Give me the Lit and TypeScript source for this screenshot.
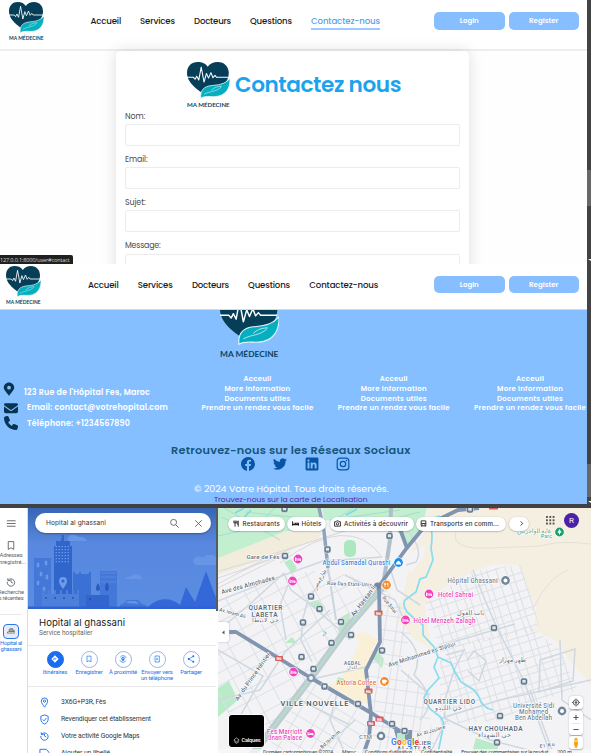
import { LitElement, html, css, svg } from "lit";
import { customElement, property } from "lit/decorators.js";

const NAV = ["Accueil", "Services", "Docteurs", "Questions", "Contactez-nous"];
const NAV_W = [30.5, 35, 37, 42, 69];

/** One line of text, letter-spaced so that it fills the width w. */
@customElement("fit-label")
class FitLabel extends LitElement {
  @property() text = "";
  @property({ type: Number }) w = 0;
  static styles = css`
    :host { display: inline-block; white-space: nowrap; line-height: inherit; }
    span { display: inline-block; }
  `;
  render() { return html`<span>${this.text}</span>`; }
  updated() {
    const s = this.renderRoot.querySelector("span") as HTMLElement;
    s.style.letterSpacing = "0px";
    const natural = s.getBoundingClientRect().width;
    if (this.w) s.style.letterSpacing = (this.w - natural) / this.text.length + "px";
  }
}

@customElement("brand-logo")
class BrandLogo extends LitElement {
  static styles = css`
    :host { display: block; }
    svg { display: block; width: 100%; height: 100%; }
    text { font: 700 14.5px "Lato", sans-serif; fill: #0b4460; }
  `;
  render() {
    return html`<svg viewBox="0 0 106 117" preserveAspectRatio="none">
      <path d="M51 88C38 78 0 58 0 28C0 10 12 0 26 0C38 0 47 5 51 12C56 4 65 0 76 0C92 0 103 12 103 28C103 52 84 68 51 88Z" fill="#063d57"/>
      <path d="M0 39H16L20 44L24 36L29 46L35 13L42 51L48 29L53 41L59 27L64 40L69 34L73 39H103" fill="none" stroke="#fff" stroke-width="2.6" stroke-linejoin="round"/>
      <path d="M34 92C32 72 42 62 60 60C76 58 92 58 106 42C107 66 96 86 70 88C56 89 46 85 34 92Z" fill="#05afc0" stroke="#e9f6fb" stroke-width="2"/>
      <path d="M42 82C56 74 72 76 84 64M60 72C68 64 76 62 86 62" fill="none" stroke="#dff5f8" stroke-width="1.4"/>
      <text x="0" y="115" textLength="105" lengthAdjust="spacingAndGlyphs">MA MÉDECINE</text>
    </svg>`;
  }
}

@customElement("site-header")
class SiteHeader extends LitElement {
  @property({ type: Number }) active = -1;
  static styles = css`
    :host { display: flex; align-items: flex-start; background: #fff; box-sizing: border-box; width: 587px;
      font: 500 8.6px/12px "Poppins", Inter, sans-serif; font-feature-settings: "cv11"; color: #1c1c1c; }
    brand-logo { width: 35px; height: 39px; flex: none; margin-top: 2px; }
    nav { display: flex; gap: 19px; margin: 15px 0 0 46.5px; }
    nav span { padding-bottom: 1px; border-bottom: 2px solid transparent; height: 12px; }
    .on { color: #5b9fe8; border-color: #9ccaff; }
    .buttons { display: flex; gap: 4px; margin: 12px 8px 0 auto; }
    .b { width: 70.5px; height: 18px; border-radius: 5px; background: #86beff; color: #fff; display: flex; align-items: center; justify-content: center; font-size: 7px; font-weight: 600; }
    :host(.low) nav { margin: 14.5px 0 0 47px; gap: 19.2px; }
    :host(.low) .b { height: 17px; }
  `;
  render() {
    return html`<brand-logo></brand-logo>
      <nav>${NAV.map((t, i) => html`<span class=${i === this.active ? "on" : ""}><fit-label text=${t} w=${NAV_W[i]}></fit-label></span>`)}</nav>
      <div class="buttons"><div class="b"><fit-label text="Login" w="19"></fit-label></div><div class="b"><fit-label text="Register" w="29.5"></fit-label></div></div>`;
  }
}

@customElement("contact-page")
class ContactPage extends LitElement {
  static styles = css`
    :host { display: block; position: relative; height: 264px; overflow: hidden; background: #fefefe; font-family: "Poppins", Inter, sans-serif; font-feature-settings: "cv11"; }
    site-header { height: 51px; padding-left: 9px; border-bottom: 2px solid #eee; }
    .card { box-sizing: border-box; width: 353px; height: 230px; margin-left: 116px; padding: 11px 9.5px 0 9px; background: #fff; border-radius: 5px; box-shadow: 0 0 15px rgba(0,0,0,.13); }
    .title { display: flex; gap: 5px; margin-left: 62px; height: 47.5px; }
    .title brand-logo { width: 43px; height: 46px; }
    .title b { font-size: 21.6px; font-weight: 600; line-height: 46px; color: #1ba3ee; }
    .field { height: 43.2px; font-size: 7.9px; line-height: 14px; color: #4b4b4b; }
    .input { box-sizing: border-box; height: 21.5px; margin-top: .5px; border: 1px solid #ececec; border-radius: 2px; background: #fff; }
    .url { position: absolute; left: 0; bottom: 0; width: 73px; height: 9.5px; background: #202020; color: #d5d5d5; font: 5.6px/10px "Open Sans", sans-serif; border-radius: 0 2px 0 0; }
  `;
  render() {
    const fields: [string, number][] = [["Nom:", 20], ["Email:", 22.5], ["Sujet:", 20.5], ["Message:", 35.5]];
    return html`<site-header .active=${4}></site-header>
      <div class="card">
        <div class="title"><brand-logo></brand-logo><b><fit-label text="Contactez nous" w="166"></fit-label></b></div>
        ${fields.map(([t, w]) => html`<div class="field"><fit-label text=${t} w=${w}></fit-label><div class="input"></div></div>`)}
      </div>
      <div class="url"><fit-label text="127.0.0.1:8000/user#contact" w="69.5"></fit-label></div>`;
  }
}

@customElement("footer-page")
class FooterPage extends LitElement {
  static styles = css`
    :host { display: block; height: 240px; overflow: hidden; font-family: "Poppins", Inter, sans-serif; font-feature-settings: "cv11"; background: #86bfff; }
    site-header { height: 46px; padding-left: 6px; border-bottom: 1px solid #c5dcf2; }
    .foot { height: 194px; overflow: hidden; display: flex; flex-direction: column; align-items: center; color: #fff; width: 587px; }
    .big { flex: none; width: 59px; height: 64px; margin: -16px 0 0 -88px; align-self: center; }
    .cols { flex: none; align-self: stretch; display: flex; height: 67.500px; margin-top: 16px; }
    .contact { width: 201.500px; padding: 10.500px 0 0 4px; box-sizing: border-box; font-size: 7.900px; font-weight: 600; line-height: 15.6px; }
    .row { display: flex; align-items: center; height: 15.6px; }
    .row svg { flex: none; width: 14px; height: 14px; fill: #073450; margin-right: 9px; }
    .row:first-child svg { margin: -7px 9px 0 -2px; }
    .row:first-child fit-label { margin-left: -1px; }
    .links { display: flex; gap: 24.3px; }
    .link { width: 112px; font-size: 7px; font-weight: 600; line-height: 9.8px; text-align: center; white-space: nowrap; }
    .link div { display: flex; justify-content: center; height: 9.8px; }
    h2 { margin: 0; flex: none; font-size: 11.3px; line-height: 16px; font-weight: 600; color: #17567b; align-self: flex-start; margin-left: 171px; }
    .social { display: flex; gap: 17.8px; align-self: flex-start; margin: -1px 0 0 241px; height: 15px; flex: none; }
    .social svg { width: 14px; height: 14px; fill: #0753a5; }
    .copy { align-self: flex-start; margin: 10px 0 0 194px; font-size: 9.5px; line-height: 14px; }
    .find { align-self: flex-start; margin: -.5px 0 0 214px; font-size: 7.6px; line-height: 10px; color: #562a9c; }
    .find, .copy { flex: none; }
  `;
  render() {
    const links: [string, number][] = [["Acceuil", 28], ["More information", 66], ["Documents utiles", 66], ["Prendre un rendez vous facile", 112]];
    return html`<site-header class="low"></site-header>
      <div class="foot">
        <brand-logo class="big"></brand-logo>
        <div class="cols">
          <div class="contact">
            <div class="row"><svg viewBox="0 0 24 24"><path d="M12 1C7 1 3 5 3 10c0 4 6 9 9 14c3-5 9-10 9-14c0-5-4-9-9-9zm0 5.500a3.200 3.200 0 1 1 0 6.400a3.200 3.200 0 0 1 0-6.400z" fill-rule="evenodd"/></svg><fit-label text="123 Rue de l'Hôpital Fes, Maroc" w="126"></fit-label></div>
            <div class="row"><svg viewBox="0 0 24 24"><path d="M2 4h20a2 2 0 0 1 1.200 3.500L12.800 15a1.500 1.500 0 0 1-1.600 0L.8 7.500A2 2 0 0 1 2 4zM0 9.500l10.500 7.300a2.600 2.600 0 0 0 3 0L24 9.500V18a3 3 0 0 1-3 3H3a3 3 0 0 1-3-3z"/></svg><fit-label text="Email: contact@votrehopital.com" w="141"></fit-label></div>
            <div class="row"><svg viewBox="0 0 24 24"><path d="M7.700 1.200C7.300.200 6.200-.300 5.200 0L1.200 1.200C.500 1.400 0 2.200 0 3c0 11.600 9.400 21 21 21c.8 0 1.600-.5 1.800-1.300l1.200-4.200c.3-1-.3-2.100-1.300-2.500l-5-2.100c-.9-.4-1.900-.1-2.400.600L13.300 17A15.800 15.800 0 0 1 7 10.700L9.400 8.800c.7-.6 1-1.600.6-2.500z"/></svg><fit-label text="Téléphone: +1234567890" w="103"></fit-label></div>
          </div>
          <div class="links">${[0, 1, 2].map(() => html`<div class="link">${links.map(([t, w]) => html`<div><fit-label text=${t} w=${w}></fit-label></div>`)}</div>`)}</div>
        </div>
        <h2><fit-label text="Retrouvez-nous sur les Réseaux Sociaux" w="239.500"></fit-label></h2>
        <div class="social">
          <svg viewBox="0 0 24 24"><path d="M24 12a12 12 0 1 0-13.900 11.900v-8.400H7.100V12h3V9.400c0-3 1.800-4.700 4.500-4.700l2.700.2v3h-1.500c-1.500 0-2 .9-2 1.900V12h3.400l-.6 3.500h-2.800v8.400A12 12 0 0 0 24 12z"/></svg>
          <svg viewBox="0 0 24 24"><path d="M24 4.600a10 10 0 0 1-2.800.8a5 5 0 0 0 2.100-2.700a10 10 0 0 1-3.100 1.200a4.900 4.900 0 0 0-8.400 4.500A14 14 0 0 1 1.700 3.200a4.900 4.900 0 0 0 1.500 6.500A4.900 4.900 0 0 1 1 9.100a4.900 4.900 0 0 0 3.900 4.900a5 5 0 0 1-2.200.1a4.900 4.900 0 0 0 4.600 3.400A9.900 9.900 0 0 1 0 19.500A14 14 0 0 0 21.500 7a10 10 0 0 0 2.500-2.400z"/></svg>
          <svg viewBox="0 0 24 24"><path fill-rule="evenodd" d="M3 1h18a2 2 0 0 1 2 2v18a2 2 0 0 1-2 2H3a2 2 0 0 1-2-2V3a2 2 0 0 1 2-2zm1.300 8.400v10.300h3.300V9.400zM6 4.200a1.900 1.900 0 1 0 0 3.800a1.900 1.900 0 0 0 0-3.800zM9.700 9.400v10.300H13v-5.100c0-3 3.600-3 3.600 0v5.100h3.300v-6c0-5.300-5.200-5.300-6.900-2.800V9.400z"/></svg>
          <svg viewBox="0 0 24 24"><path fill-rule="evenodd" d="M7 1h10a6 6 0 0 1 6 6v10a6 6 0 0 1-6 6H7a6 6 0 0 1-6-6V7a6 6 0 0 1 6-6zm0 2a4 4 0 0 0-4 4v10a4 4 0 0 0 4 4h10a4 4 0 0 0 4-4V7a4 4 0 0 0-4-4zm5 3.400a5.600 5.600 0 1 1 0 11.200a5.600 5.600 0 0 1 0-11.200zm0 2a3.600 3.600 0 1 0 0 7.200a3.600 3.600 0 0 0 0-7.200zM18 4.800a1.300 1.300 0 1 1 0 2.600a1.300 1.300 0 0 1 0-2.600z"/></svg>
        </div>
        <div class="copy"><fit-label text="© 2024 Votre Hôpital. Tous droits réservés." w="194.500"></fit-label></div>
        <div class="find"><fit-label text="Trouvez-nous sur la carte de Localisation" w="153.500"></fit-label></div>
      </div>`;
  }
}

const HISTORY = svg`<path d="M5 5v5h5M5.500 9.500A8 8 0 1 1 4 13M12 8v5l4 2.500" fill="none" stroke="currentColor" stroke-width="2"/>`;
const BOOKMARK = svg`<path d="M6 3.500h12v17l-6-3.500l-6 3.500z" fill="none" stroke="currentColor" stroke-width="2"/>`;

@customElement("place-panel")
class PlacePanel extends LitElement {
  static styles = css`
    :host { display: flex; width: 218px; height: 245px; overflow: hidden; background: #fff; font-family: Roboto, sans-serif; }
    .rail { position: relative; width: 28px; flex: none; display: flex; flex-direction: column; align-items: center; overflow: hidden; color: #5f6368; font-size: 5.8px; line-height: 6.8px; box-sizing: border-box; padding-right: 6px; box-shadow: inset -1px 0 #dcdcdc; }
    .rail svg { width: 12px; height: 11px; flex: none; }
    .menu { margin-top: 9.500px; }
    .save { margin-top: 11px; }
    .rail .t { height: 13.600px; display: flex; flex-direction: column; align-items: center; }
    .save + .t { margin-top: 1.500px; }
    .hist { margin-top: 10.500px; }
    .hist + .t { margin-top: 1.500px; }
    .line { width: 22px; height: 1px; background: #e8e8e8; margin-top: 11.500px; flex: none; }
    .thumb { width: 14px; height: 13px; margin-top: 9px; border: 1.300px solid #2d76e6; border-radius: 4px; background: #e6edf8; display: flex; align-items: center; justify-content: center; flex: none; }
    .rail .thumb svg { width: 9px; height: 8px; }
    .thumb + .t { margin-top: 1px; color: #1a73e8; line-height: 6px; }
    .panel { width: 188px; flex: none; display: flex; flex-direction: column; }
    .hero { position: relative; height: 101px; flex: none; }
    .hero > svg { display: block; width: 188px; height: 101px; }
    .search { position: absolute; left: 7px; top: 5px; width: 176px; height: 20px; border-radius: 10px; background: #fff; box-shadow: 0 1px 2px rgba(0,0,0,.3); box-sizing: border-box; padding: 0 7px 0 11px; display: flex; align-items: center; font: 6.600px Inter, sans-serif; color: #333; }
    .search svg { width: 11px; height: 11px; color: #5f6368; }
    .search .mag { margin-left: auto; margin-right: 13px; }
    h1 { margin: 6.500px 0 0 11px; font: 400 9.600px/14px Inter, sans-serif; color: #222; }
    .sub { margin-left: 11px; font-size: 6.500px; line-height: 7px; color: #666; }
    .acts { margin-top: 8px; border-top: 1px solid #e8e8e8; border-bottom: 1px solid #e8e8e8; height: 42.500px; display: flex; padding-left: 10px; flex: none; box-sizing: border-box; }
    .act { width: 34px; display: flex; flex-direction: column; align-items: center; font-size: 5.900px; line-height: 6.300px; color: #1a73e8; }
    .disc { box-sizing: border-box; width: 17px; height: 17px; border: 1px solid #8db7f3; border-radius: 50%; margin: 5px 0 1.500px; display: flex; align-items: center; justify-content: center; flex: none; }
    .disc svg { width: 8px; height: 8px; }
    .solid { background: #1a6cf0; color: #fff; border-color: #1a6cf0; }
    .facts { padding: 7px 0 0 11px; }
    .fact { height: 16.800px; display: flex; align-items: center; gap: 11px; font-size: 6.800px; color: #333; }
    .fact svg { width: 11px; height: 11px; color: #1a6fe6; }
    .scroll { width: 2px; height: 103px; background: #555c66; }
  `;
  render() {
    const windows = [0, 1, 2, 3, 4, 5].flatMap(r => [0, 1, 2, 3, 4].map(c => svg`<path d="M${27.500 + c * 3} ${38 + r * 3}h1.500v1.200h-1.500z" fill="#6d99e8"/>`));
    const stroke = (d: string) => svg`<path d=${d} fill="none" stroke="currentColor" stroke-width="2"/>`;
    const acts = [
      { l: [["Itinéraires", 24.500]], i: svg`<path d="M12 1l11 11-11 11L1 12z" fill="#fff"/><path d="M8 15v-4h6M12 8l3 3-3 3" stroke="#1a6cf0" stroke-width="2" fill="none"/>` },
      { l: [["Enregistrer", 27]], i: BOOKMARK },
      { l: [["À proximité", 28]], i: svg`<circle cx="12" cy="12" r="10" fill="none" stroke="currentColor" stroke-width="2" stroke-dasharray="22 9.400" stroke-dashoffset="-5"/><path d="M12 6a5 5 0 0 1 5 5c0 3-3 5-5 8c-2-3-5-5-5-8a5 5 0 0 1 5-5z" fill="currentColor"/><circle cx="12" cy="11" r="2" fill="#fff"/>` },
      { l: [["Envoyer vers", 31.500], ["un téléphone", 32]], i: stroke("M6 8V3h13v18H6v-5M2 12h11M10 8l4 4-4 4") },
      { l: [["Partager", 21.500]], i: svg`<path d="M19 4L5 12l14 8" fill="none" stroke="currentColor" stroke-width="2"/><circle cx="19" cy="4" r="3" fill="currentColor"/><circle cx="5" cy="12" r="3" fill="currentColor"/><circle cx="19" cy="20" r="3" fill="currentColor"/>` },
    ];
    const facts = [
      { t: "3X6G+P3R, Fès", w: 45, i: stroke("M12 22C9 17 5 13 5 9a7 7 0 0 1 14 0c0 4-4 8-7 13zM12 6.500a2.500 2.500 0 1 1 0 5a2.500 2.500 0 0 1 0-5z") },
      { t: "Revendiquer cet établissement", w: 90, i: stroke("M12 2l8 3v6c0 5-3 9-8 11c-5-2-8-6-8-11V5zM8 12l3 3l5-6") },
      { t: "Votre activité Google Maps", w: 78.500, i: HISTORY },
      { t: "Ajouter un libellé", w: 49, i: stroke("M2 5h14l6 7-6 7H2z") },
    ];
    return html`<div class="rail">
        <svg class="menu" viewBox="0 0 24 24">${stroke("M3 6h19M3 12h19M3 18h19")}</svg>
        <svg class="save" viewBox="0 0 24 24">${BOOKMARK}</svg>
        <div class="t"><fit-label text="Adresses" w="23"></fit-label><fit-label text="enregistré..." w="30"></fit-label></div>
        <svg class="hist" viewBox="0 0 24 24">${HISTORY}</svg>
        <div class="t"><fit-label text="Recherche" w="26"></fit-label><fit-label text="s récentes" w="25"></fit-label></div>
        <div class="line"></div>
        <div class="thumb"><svg viewBox="0 0 22 20"><path d="M0 12l4-1V6l4-3h7v4l4 1v8H0z" fill="#777"/><path d="M2 14h16M6 8h8" stroke="#ddd" stroke-width="2"/></svg></div>
        <div class="t"><fit-label text="Hopital al" w="22"></fit-label><fit-label text="ghassani" w="21"></fit-label></div>
      </div>
      <div class="panel">
        <div class="hero">
          <svg viewBox="0 0 188 101">
            <defs><linearGradient id="sky" x1="0" y1="0" x2="0" y2="1"><stop offset="0" stop-color="#3866b5"/><stop offset=".35" stop-color="#5888df"/><stop offset="1" stop-color="#5a8de2"/></linearGradient></defs>
            <path d="M0 0h188v101H0z" fill="url(#sky)"/>
            <path d="M165 54c0-5 6-7 10-4c4-4 10-4 13-1v8h-20zM97 71c2-3 6-2 8-4c4-2 8 0 10 4zM40 31c0-4 6-6 10-2c4-1 8 1 9 4H40z" fill="#6796e7"/>
            <path d="M6 50h17v50H6zM72 63h17v36H72z" fill="#4478d8"/>
            <path d="M34 27h2v6h6v5h2v62H26V38h2v-5h5z" fill="#3065cc"/>
            <path d="M45 66h18v34H45zM45 64h2v4h-2zM51 64h2v4h-2zM61 64h2v4h-2z" fill="#3b70d4"/>
            ${windows}
            <path d="M9 55h2v4H9zM17 53h2v4h-2zM12 64h2v4h-2zM18 67h2v4h-2zM9 73h2v4H9zM15 79h2v4h-2zM73 65h15M73 69h15M73 74h15" stroke="#6c99e7" stroke-width=".5" fill="#6c99e7"/>
            <path d="M14 86h37v14H14zM14 82h2v6h-2zM20 82h2v6h-2zM26 82h2v6h-2zM32 82h2v6h-2zM38 82h2v6h-2zM44 82h2v6h-2zM49 82h2v6h-2z" fill="#4c80db"/>
            <path d="M17 89h2v2h-2zM26 89h2v2h-2zM35 89h2v2h-2zM44 89h2v2h-2z" fill="#2d5fc7"/>
            <path d="M58 87h23v13H58z" fill="#3265cd"/><circle cx="62" cy="91" r="1" fill="#1f4fab"/><path d="M70 75c-3 5-2 8 0 8s3-3 0-8zM79 74c-3 5-2 9 0 9s3-4 0-9z" fill="#285abf"/>
            <path d="M35 81c-2-3-4-5-4-8a4 4 0 0 1 8 0c0 3-2 5-4 8z" fill="#6f9ae6"/><circle cx="35" cy="73" r="1.600" fill="#3065cc"/>
            <path d="M120 99c10-10 23-10 32-2l6-18l9 15L178 63l10 27v11H120z" fill="#3468d8"/>
            <path d="M92 97l4-2l3-3h11l4 4l4 1v3H92z" fill="#4277d6"/><path d="M98 95l2-2h8l3 3z" fill="#6593e4"/>
            <path d="M0 98.500h188V101H0z" fill="#2e63d5"/>
          </svg>
          <div class="search"><fit-label text="Hopital al ghassani" w="60"></fit-label>
            <svg class="mag" viewBox="0 0 24 24">${stroke("M10 3a6.500 6.500 0 1 1 0 13a6.500 6.500 0 0 1 0-13zM15 15l6 6")}</svg>
            <svg viewBox="0 0 24 24">${stroke("M5 5l14 14M19 5L5 19")}</svg></div>
        </div>
        <h1><fit-label text="Hopital al ghassani" w="86"></fit-label></h1>
        <div class="sub"><fit-label text="Service hospitalier" w="53.500"></fit-label></div>
        <div class="acts">${acts.map((a, i) => html`<div class="act"><div class="disc ${i === 0 ? "solid" : ""}"><svg viewBox="0 0 24 24">${a.i}</svg></div>${a.l.map(([t, w]) => html`<fit-label text=${t} w=${w}></fit-label>`)}</div>`)}</div>
        <div class="facts">${facts.map(f => html`<div class="fact"><svg viewBox="0 0 24 24">${f.i}</svg><fit-label text=${f.t} w=${f.w}></fit-label></div>`)}</div>
      </div><div class="scroll"></div>`;
  }
}

@customElement("city-map")
class CityMap extends LitElement {
  static styles = css`
    :host { display: block; position: relative; width: 373px; height: 245px; overflow: hidden; font-family: Roboto, sans-serif; background: #f3f2f5; }
    .map { display: block; width: 373px; height: 245px; }
    text { font-family: Roboto, "DejaVu Sans", sans-serif; paint-order: stroke; stroke: #fff; stroke-width: 1.200px; stroke-linejoin: round; }
    .chips { position: absolute; left: 10px; top: 8.500px; display: flex; }
    .chip { box-sizing: border-box; height: 14px; border-radius: 7px; background: #fff; box-shadow: 0 .5px 1.500px rgba(0,0,0,.35); display: flex; align-items: center; gap: 3px; padding-left: 4.500px; font: 500 6.200px Inter, sans-serif; color: #333; flex: none; }
    .chip svg { width: 7px; height: 7px; fill: none; stroke: #222; stroke-width: 3px; }
    .c0 { width: 56.500px; margin-right: 2.500px; } .c1 { width: 39px; margin-right: 3.500px; } .c2 { width: 84px; margin-right: 2px; } .c3 { width: 90px; margin-right: 3px; }
    .next { width: 20px; padding-left: 9.500px; }
    .avatar { position: absolute; left: 346px; top: 5px; width: 15px; height: 15px; border-radius: 50%; background: #4a22a5; color: #fff; font-size: 8px; line-height: 15px; text-align: center; }
    .apps { position: absolute; left: 328px; top: 8px; width: 9px; height: 9px; fill: #555; }
    .fold { position: absolute; left: 0; top: 114px; width: 11px; height: 20px; background: #fff; border-radius: 0 3px 3px 0; box-shadow: 0 0 2px #aaa; display: flex; align-items: center; justify-content: center; }
    .fold svg { width: 5px; height: 5px; fill: #555; }
    .layers { position: absolute; left: 10.500px; top: 207px; width: 35.500px; height: 32px; border-radius: 3px; background: #000; box-shadow: 0 0 0 .7px #fff; color: #fff; font-size: 5.600px; font-weight: 500; display: flex; align-items: flex-end; gap: 2px; padding: 0 0 3px 4px; box-sizing: border-box; line-height: 7px; }
    .layers svg { width: 7px; height: 7px; fill: none; stroke: #fff; stroke-width: 2px; }
    .tools { position: absolute; left: 351px; top: 188px; display: flex; flex-direction: column; gap: 1.500px; }
    .tools div { width: 14px; height: 13px; border-radius: 3px; background: #fff; box-shadow: 0 .5px 1.500px rgba(0,0,0,.3); display: flex; }
    .tools .z { height: 24px; }
    .tools svg { width: 100%; height: 100%; }
    .terms { position: absolute; left: 0; top: 241px; width: 373px; height: 7px; background: rgba(248,248,248,.75); font-size: 5.200px; line-height: 7px; color: #444; display: flex; gap: 9px; padding-left: 45px; box-sizing: border-box; white-space: nowrap; }
  `;
  grid(x: number, y: number, w: number, h: number, a: number, sx: number, sy: number, cl: string) {
    let d = "";
    for (let i = 0, u = 0; u <= w; u += sx * (i % 3 === 1 ? 0.7 : 1.15), i++) d += `M${x + u} ${y}v${h}`;
    for (let i = 0, v = 0; v <= h; v += sy * (i % 2 ? 0.8 : 1.2), i++) d += `M${x} ${y + v}h${w}`;
    return svg`<g clip-path="url(#${cl})"><path d=${d} transform="rotate(${a} ${x + w / 2} ${y + h / 2})" fill="none" stroke="#dbe0e6" stroke-width=".9"/></g>`;
  }
  t(s: string, x: number, y: number, w: number, size: number, fill: string, weight = 500, a = 0) {
    return svg`<text x=${x} y=${y} textLength=${w} font-size=${size} fill=${fill} font-weight=${weight} transform="rotate(${a} ${x} ${y})">${s}</text>`;
  }
  pin(x: number, y: number, c: string, k: string) {
    const glyph: Record<string, unknown> = {
      bed: svg`<path d="M-2.500-1.500v3.500M-2.500 1H2.500M2.500 2V0H-.5" stroke="#fff" fill="none" stroke-width=".9"/><circle cx="-1.300" cy="-.4" r=".6" fill="#fff"/>`,
      dot: svg`<circle r="2" fill="#fff"/>`,
      food: svg`<path d="M-1.500-2.300v4.600M1.500-2.300v4.600M-2.300-2v1.500h1.600V-2M1-2v2" stroke="#fff" fill="none" stroke-width=".7"/>`,
      cup: svg`<path d="M-2-1.500h3v2.700h-3zM1-1h1.200v1.200H1M-2 2.200H1.500" stroke="#fff" fill="#fff" stroke-width=".6"/>`,
      mosque: svg`<path d="M-2.500 2v-2h5v2zM-1.500 0a1.500 1.800 0 0 1 3 0z" fill="#fff"/>`,
      tree: svg`<path d="M0-3L2.200.8H.5V2.500h-1V.8h-1.700z" fill="#fff"/>`,
    };
    return svg`<g transform="translate(${x} ${y})"><circle r="5" fill="#fff"/><circle r="4.400" fill=${c}/>${glyph[k]}</g>`;
  }
  render() {
    const stops = [[285, 556], [389.5, 536], [327.500, 549.500], [311, 596.500], [319.500, 609], [303, 622.500], [341, 622], [331.500, 643], [351, 635], [382, 650.500], [301.500, 657], [313.500, 669], [324.500, 686.500], [358, 704], [392, 724], [284.500, 509], [494, 628], [524, 681.500], [500, 716], [497, 742.500], [404.500, 731], [470, 509.500]];
    const shields = [[378.500, 613], [279, 658.500], [368.500, 691], [379.500, 719], [371, 723.500]];
    const river = "M440 516L428 520Q434 530 431 548L433 560L429 570L426 577L420 579L416 592L405 600Q402 604 407 612L416 620L423 625L423 635L434 647L438 657L434 667L439 678L428 690L424 698L430 709L438 715Q445 720 443 728L438 753M438 657L451 663L455 672L461 682L474 690L479 697Q482 708 493 710";
    const G = "#5d6d7c";
    return html`<svg class="map" viewBox="218 508 373 245">
      <defs>
        <clipPath id="a"><path d="M218 602L284 574L330 570L379 586L348 625L300 690L255 753H218z"/></clipPath>
        <clipPath id="b"><path d="M384 588L402 605L412 630L400 665L425 690L436 753H372L374 710L367 670L381 642z"/></clipPath>
        <clipPath id="c"><path d="M426 602L471 572L510 566L520 565L530 592L540 630L440 650z"/></clipPath>
        <clipPath id="d"><path d="M440 650L530 626L560 650L578 690L540 700L500 720L440 725z"/></clipPath>
        <clipPath id="e"><path d="M312 678L372 714L367 753H265z"/></clipPath>
      </defs>
      <path d="M218 508H319L323 531H288L218 559z" fill="#c3efd1"/>
      <path d="M322 508H427L422 527L407 546L400 534L389 526L324 520z" fill="#c3efd1"/>
      <path d="M218 558L286 531L322 532L318 540L218 575z" fill="#f2ecdd"/>
      <path d="M427 508H591V685L571 662L555 640L534 630L536 608L519 565L494 564L471 572L440 590L424 605L432 649L415 640L398 620L402 600L411 560L412 548L428 528z" fill="#f4efe1"/>
      <path d="M353 657L360 642L380 655L366 668L370 705L324 688L340 680zM355 635L364 632L379 640L366 657z" fill="#faf0d7"/>
      <path d="M408 553L425 545L424 556L410 574z" fill="#f3f2f5"/>
      <path d="M218 688L229 681L238 700L218 717zM340 618L350 612V624L338 633zM307 603L318 600L325 607L322 614zM372 658L378 652L384 659L382 668zM476 738L498 745V753H472zM336 682l2-5l7 2l-3 6zM284 562l7-3l6 9l-5 6zM285 643l7-6l5 6z" fill="#b9ebc8"/>
      <rect x="344" y="540" width="12" height="17" rx="5" fill="#abe8c0"/>
      <path d="M221 517L250 530M224 508L280 540M275 508L258 525M353 508L334 521M218 536L275 523M245 512L320 520M330 520L400 510M350 530L420 512" stroke="#a5deca" fill="none"/>
      <path d="M235 513l9-5M242 520l9-10M346 515l11-6M322 630l4 3l-3 3" stroke="#81d5e4" fill="none" stroke-width="1.500"/>
      <g fill="none" stroke="#dad9d8" stroke-width="1">
        <path d="M218 584L273 554L310 542L348 530M218 578L284 555M218 588L290 552M219 571L282 553M240 572L295 547M280 563Q350 511 382 557"/>
      </g>
      ${this.grid(210, 560, 180, 190, -28, 17, 14, "a")}
      ${this.grid(350, 570, 100, 190, 8, 10, 12, "b")}
      ${this.grid(410, 540, 140, 130, -18, 8, 9, "c")}
      ${this.grid(420, 600, 180, 150, -17, 9, 8, "d")}
      ${this.grid(250, 660, 140, 120, 31, 16, 13, "e")}
      <g fill="none" stroke="#cfd8e0" stroke-width="1.500">
        <path d="M218 601L284 575L323 561L382 557M218 631L250 604L284 573M284 573L291 590L311 605L340 630L350 640M288 585L280 605L286 640M303 620L301 640L312 662M328 570L308 600L302 622M345 575L395 600L406 624M390 568L397 590L420 605M218 650L263 676L235 725M218 700L260 690L285 652L330 610M312 679L366 667M337 693L330 720L345 753M355 720L318 753M300 700L350 725"/>
        <path d="M401 660L418 655L456 641L515 624M473 570L485 600L497 628L524 681L550 753M446 655L464 650L455 668L446 696L444 718L490 740L540 753M401 670L430 695M442 718L500 700L591 680M530 690L552 750M446 721L430 753M401 632Q425 651 414 675Q440 700 420 720M560 640L562 700L591 720M540 660L575 649L573 681L539 692zM467 660l7-9l12 10l-7 20l-11-10"/>
      </g>
      <path d="M456 532Q450 550 490 548L540 546Q560 540 591 544M568 570Q550 575 532 610" fill="none" stroke="#e2e0d9"/>
      <path d="M407 530Q424 550 416 562L406 565" fill="none" stroke="#d5d8dc" stroke-width="1.500"/>
      <path d=${river} fill="none" stroke="#89dcef" stroke-width="1.700"/>
      <path d="M382 588L348 627L311 678L252 755" fill="none" stroke="#bfcbd3" stroke-width="7"/>
      <path d="M382 588L348 627L311 678L252 755" fill="none" stroke="#b5dec6" stroke-width="2"/>
      <path d="M391 508L390 540L383 586" fill="none" stroke="#b1bfcd" stroke-width="4"/>
      <path d="M319 508L324 531L328 568" fill="none" stroke="#91a4be" stroke-width="3.500"/>
      <path d="M328 568L336 620" fill="none" stroke="#cbd5de" stroke-width="2"/>
      <path d="M218 632H236L311 678L373 714L408 736M479 508L458 510L425 526L406 549L379 586L380 642L366 670L371 714L369 738L363 755M392 521L400 529L407 548" fill="none" stroke="#8195b1" stroke-width="3.800" stroke-linejoin="round"/>
      <path d="M394 730h18v14h-14z" fill="#8195b1"/><path d="M397 733h8v7h-8z" fill="#b9ebc8"/>
      <path d="M489 508h9v1.500h-9z" fill="#d85f61"/>
      <circle cx="311" cy="678" r="4" fill="#8195b1"/><circle cx="311" cy="678" r="2" fill="#f3f2f5"/><circle cx="377.500" cy="586" r="3.500" fill="#7187a3"/>
      ${stops.map(([x, y]) => svg`<g transform="translate(${x} ${y})"><rect x="-3.500" y="-3.500" width="7" height="7" rx="2.300" fill="#5e7486" stroke="#fff" stroke-width=".5"/><path d="M-1.500-1.500h3v2.600h-3zM-1.200 2.100h.8M.4 2.100h.8" fill="#dfe8ed" stroke="#dfe8ed" stroke-width=".4"/></g>`)}
      ${shields.map(([x, y]) => svg`<g><rect x=${x - 4} y=${y - 2.500} width="8" height="5" rx=".8" fill="#d85f61"/><text x=${x - 2.500} y=${y + 1.600} font-size="4" fill="#fff" style="stroke:none" font-weight="700">N6</text></g>`)}
      ${this.t("Gare de Fès", 246.500, 558.500, 33, 6.200, G)}
      ${this.t("Abdul Samadal Qurashi", 322.500, 565, 68, 6.400, "#4285d6")}
      ${this.t("Ave des Almohades", 222, 594, 55, 6.200, G, 500, -15)}
      ${this.t("Rue Des Etats-Unis", 327, 585, 45, 5.200, G, 500, 2)}
      ${this.t("Av. Hassan II", 354, 617, 37, 6.500, G, 500, -53)}
      ${this.t("Rue Sinaï", 382, 598, 20, 5.200, G, 500, 52)}
      ${this.t("شارع مصر", 316, 590, 22, 6, G, 400, -62)}
      ${this.t("QUARTIER", 248.500, 610, 34, 6.500, G, 600)}
      ${this.t("LABETA", 251.500, 616.500, 26, 6.500, G, 600)}
      ${this.t("حي لابيطا", 252, 622, 27, 6, G, 400)}
      ${this.t("Av. Imam Ali", 219, 611, 27, 5, G, 500, 16)}
      ${this.t("Av. du Prince Héritier", 238, 701, 57, 6, G, 500, -55)}
      ${this.t("AGDAL", 344, 664.500, 16.500, 4.800, G, 600)}
      ${this.t("أكدال", 347, 669, 10, 4.600, G, 400)}
      ${this.t("Ave Mohammed es Slaoui", 389, 667, 70, 5.900, G, 500, -18)}
      ${this.t("Astoria Coffee", 336.500, 684.500, 39.500, 6.300, "#e17a2e")}
      ${this.t("VILLE NOUVELLE", 280.500, 705.500, 68, 7.500, "#515b65", 600)}
      ${this.t("Fes Marriott", 267, 734, 35, 6.300, "#ed45bd")}
      ${this.t("Jnan Palace", 268, 740, 34, 6.300, "#ed45bd")}
      ${this.t("Bd Ibrahim", 322, 749, 25, 5, G, 500, -42)}
      ${this.t("CTM", 359, 739, 13, 6.200, "#708899")}
      ${this.t("QUARTIER LIDO", 423.500, 704, 51.500, 6.300, G, 600)}
      ${this.t("حي الليدو", 435, 710, 27, 6.300, G, 400)}
      ${this.t("HAY CHOUHADA", 468.500, 731, 54, 6.500, G, 600)}
      ${this.t("حي الشهداء", 478, 737, 33, 6.500, G, 400)}
      ${this.t("ATELIER", 407, 744.500, 24, 6.200, G, 600)}
      ${this.t("AL-ATLAS", 397, 750.500, 34, 6.300, G, 600)}
      ${this.t("Av. Al Joulane", 417, 737, 30, 5, G, 500, -17)}
      ${this.t("Hôpital Ghassani", 447.500, 583, 50, 6.300, "#708899")}
      ${this.t("Hotel Sahrai", 438, 597, 35, 6.300, "#ed45bd")}
      ${this.t("Hôtel Menzeh Zalagh", 413.500, 623, 62, 6.300, "#ed45bd")}
      ${this.t("باب الغول", 457, 615, 27, 6.500, G, 400)}
      ${this.t("ظهر مهراز", 499, 662, 27, 6.500, G, 400)}
      ${this.t("Université Sidi", 513, 708, 41, 6.300, "#708899")}
      ${this.t("Mohamed", 519, 714, 29, 6.300, "#708899")}
      ${this.t("Ben Abdellah", 515, 719.500, 37, 6.300, "#708899")}
      ${this.t("غابة الواجريين", 517, 533, 34, 6.200, "#46a284", 400)}
      ${this.t("Parc", 541, 537.500, 11, 5.200, "#46a284")}
      ${this.t("El Ko", 540, 748, 15, 5, G, 500, -8)}
      ${this.pin(298, 559, "#f044be", "bed")}${this.pin(292.500, 581, "#f044be", "bed")}${this.pin(293.500, 672, "#f044be", "bed")}${this.pin(310.500, 733.500, "#f044be", "bed")}${this.pin(429, 594, "#f044be", "bed")}${this.pin(405.500, 620, "#f044be", "bed")}
      ${this.pin(398.500, 562.500, "#168fee", "mosque")}${this.pin(386.500, 585, "#f58a2b", "food")}${this.pin(384.500, 681.500, "#f58a2b", "cup")}${this.pin(505.500, 580.500, "#708899", "dot")}${this.pin(381, 736, "#708899", "dot")}${this.pin(562, 711, "#708899", "dot")}${this.pin(559.500, 532, "#12a16c", "tree")}
      <text x="391" y="745" font-size="8.500" font-weight="700" textLength="28"><tspan fill="#4285f4">G</tspan><tspan fill="#ea4335">o</tspan><tspan fill="#fbbc05">o</tspan><tspan fill="#4285f4">g</tspan><tspan fill="#34a853">l</tspan><tspan fill="#ea4335">e</tspan></text>
    </svg>
    <div class="chips">
      <div class="chip c0"><svg viewBox="0 0 24 24"><path d="M7 2v21M3 2v8h8V2M18 23V3c-4 1-4 6-4 11h4"/></svg><fit-label text="Restaurants" w="37.500"></fit-label></div>
      <div class="chip c1"><svg viewBox="0 0 24 24"><path d="M1 4v16M1 16h22M23 20v-9H11v5M6 9v3" stroke-width="4"/></svg><fit-label text="Hôtels" w="20"></fit-label></div>
      <div class="chip c2"><svg viewBox="0 0 24 24"><path d="M2 6h5l2-3h6l2 3h5v15H2zM12 9a4 4 0 1 1 0 8a4 4 0 0 1 0-8"/></svg><fit-label text="Activités à découvrir" w="64"></fit-label></div>
      <div class="chip c3"><svg viewBox="0 0 24 24"><path d="M4 3h16v17H4zM4 12h16M7 16h2M15 16h2M6 20v3M18 20v3"/></svg><fit-label text="Transports en comm..." w="69"></fit-label></div>
      <div class="chip next"><svg viewBox="0 0 24 24"><path d="M9 5l7 7-7 7"/></svg></div>
    </div>
    <svg class="apps" viewBox="0 0 9 9">${[0, 3.300, 6.600].flatMap(y => [0, 3.300, 6.600].map(x => svg`<rect x=${x} y=${y} width="1.900" height="1.900"/>`))}</svg>
    <div class="avatar">R</div>
    <div class="fold"><svg viewBox="0 0 10 10"><path d="M7 1v8L2 5z"/></svg></div>
    <div class="terms"><fit-label text="Données cartographiques ©2024" w="70"></fit-label><fit-label text="Maroc" w="14"></fit-label><fit-label text="Conditions d'utilisation" w="47"></fit-label><fit-label text="Confidentialité" w="31"></fit-label><fit-label text="Envoyer des commentaires sur le produit" w="87"></fit-label><span>200 m</span></div>
    <div class="layers"><svg viewBox="0 0 24 24"><path d="M12 3l9 7-9 7-9-7zM3 15l9 7 9-7"/></svg><fit-label text="Calques" w="19"></fit-label></div>
    <div class="tools">
      <div><svg viewBox="0 0 14 13"><circle cx="7" cy="6.500" r="2.700" fill="none" stroke="#555"/><circle cx="7" cy="6.500" r="1.200" fill="#555"/><path d="M7 2.500v1M7 9.500v1M3 6.500h1M10 6.500h1" stroke="#555"/></svg></div>
      <div class="z"><svg viewBox="0 0 14 24"><path d="M4.500 6.500h5M7 4v5M4.500 18.500h5" stroke="#555" stroke-width="1.100"/><path d="M3 12.500h8" stroke="#ddd" stroke-width=".7"/></svg></div>
      <div><svg viewBox="0 0 14 13"><circle cx="7" cy="3.500" r="1.700" fill="#f5b31c"/><path d="M5 5.500h4v4H8.200v2.300H5.800V9.500H5z" fill="#f5a71c"/></svg></div>
    </div>`;
  }
}

@customElement("app-root")
class AppRoot extends LitElement {
  static styles = css`
    :host { display: block; width: 591px; height: 753px; overflow: hidden; background: #fff; }
    .shot { display: grid; grid-template-columns: 587px 4px; }
    .bar { background: #434343; display: flex; flex-direction: column; }
    .thumb { background: #686868; }
    .one { height: 36px; margin-top: 170px; } .two { height: 33px; margin-top: 200px; }
    .bar svg { display: block; width: 4px; height: 3px; fill: #fff; margin-top: auto; }
    .one + svg { margin: 53px 0 0; }
    .strip { height: 4px; background: #414143; }
    .maps { display: flex; }
  `;
  render() {
    const arrow = html`<svg viewBox="0 0 4 3"><path d="M1 0h3v2z"/></svg>`;
    return html`
      <div class="shot"><contact-page></contact-page><div class="bar"><div class="thumb one"></div>${arrow}</div></div>
      <div class="shot"><footer-page></footer-page><div class="bar"><div class="thumb two"></div>${arrow}</div></div>
      <div class="strip"></div>
      <div class="maps"><place-panel></place-panel><city-map></city-map></div>`;
  }
}
